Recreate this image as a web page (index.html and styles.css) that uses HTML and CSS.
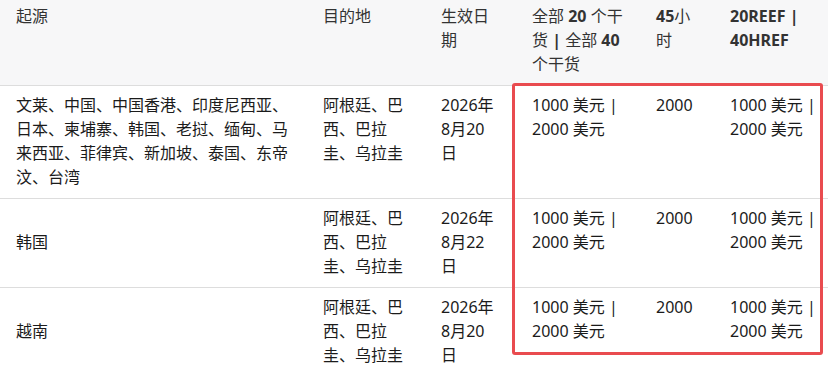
FILE: index.html
```html
<!DOCTYPE html>
<html lang="zh">
<head>
<meta charset="utf-8">
<link rel="stylesheet" href="styles.css">
</head>
<body>
<div class="wrap">
<table class="rates">
  <colgroup>
    <col class="c1"><col class="c2"><col class="c3"><col class="c4"><col class="c5"><col class="c6">
  </colgroup>
  <thead>
    <tr>
      <th>起源</th>
      <th>目的地</th>
      <th class="date">生效日期</th>
      <th class="dry">全部 <b>20</b> 个干货 <b>|</b> 全部 <b>40</b> 个干货</th>
      <th><b>45</b>小时</th>
      <th class="reef"><b>20REEF | 40HREF</b></th>
    </tr>
  </thead>
  <tbody>
    <tr>
      <td>文莱、中国、中国香港、印度尼西亚、日本、柬埔寨、韩国、老挝、缅甸、马来西亚、菲律宾、新加坡、泰国、东帝汶、台湾</td>
      <td>阿根廷、巴西、巴拉圭、乌拉圭</td>
      <td class="date">2026年8月20日</td>
      <td class="dry">1000 美元 | 2000 美元</td>
      <td>2000</td>
      <td class="reef">1000 美元 | 2000 美元</td>
    </tr>
    <tr>
      <td class="mid">韩国</td>
      <td>阿根廷、巴西、巴拉圭、乌拉圭</td>
      <td class="date">2026年8月22日</td>
      <td class="dry">1000 美元 | 2000 美元</td>
      <td>2000</td>
      <td class="reef">1000 美元 | 2000 美元</td>
    </tr>
    <tr>
      <td class="mid">越南</td>
      <td>阿根廷、巴西、巴拉圭、乌拉圭</td>
      <td class="date">2026年8月20日</td>
      <td class="dry">1000 美元 | 2000 美元</td>
      <td>2000</td>
      <td class="reef">1000 美元 | 2000 美元</td>
    </tr>
  </tbody>
</table>
<div class="highlight"></div>
</div>
</body>
</html>
```
FILE: styles.css
```css
html, body {
  margin: 0;
  padding: 0;
  background: #ffffff;
}
body {
  font-family: "Noto Sans", "Noto Sans CJK SC", sans-serif;
  font-size: 16px;
  line-height: 24px;
  color: #1b1b1b;
}
.wrap {
  position: relative;
  width: 828px;
}
.rates {
  width: 828px;
  border-collapse: collapse;
  table-layout: fixed;
}
.c1 { width: 307px; }
.c2 { width: 118px; }
.c3 { width: 91px; }
.c4 { width: 124px; }
.c5 { width: 74px; }
.c6 { width: 114px; }

.rates th {
  background: #f7f7f8;
  color: #333;
  font-weight: 400;
  text-align: left;
  vertical-align: top;
  padding: 4px 16px 9px 16px;
  border-bottom: 1px solid #dddddd;
}
.rates th b {
  font-weight: 700;
}
.rates td {
  vertical-align: top;
  padding: 7px 16px 9px 16px;
  border-bottom: 1px solid #dddddd;
}
.rates td.mid {
  vertical-align: middle;
}
.rates .date { padding-right: 20px; }
.rates .dry { padding-right: 8px; }
.rates .reef { padding-right: 8px; }

.highlight {
  position: absolute;
  left: 512px;
  top: 83px;
  width: 305px;
  height: 266px;
  border: 3px solid #e94b4f;
  border-radius: 3px;
}
```
